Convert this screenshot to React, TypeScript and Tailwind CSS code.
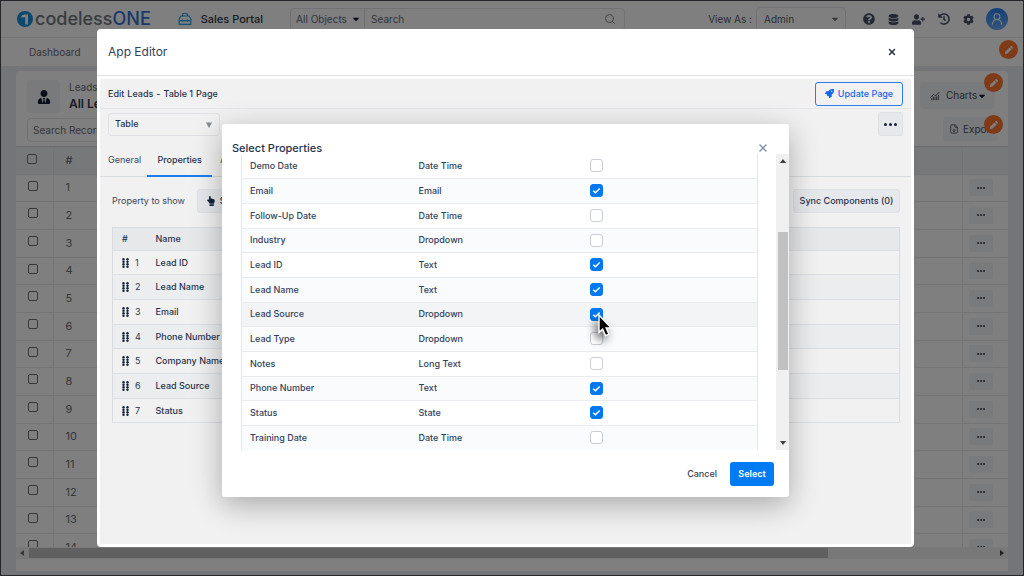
import { useState } from "react";
import {
  FaCaretDown,
  FaCog,
  FaDatabase,
  FaHandPointUp,
  FaHistory,
  FaPen,
  FaQuestionCircle,
  FaRocket,
  FaUserPlus,
  FaUserTie,
} from "react-icons/fa";
import { ChartNoAxesCombined, FileDown, Search, UserRound, X } from "lucide-react";

interface Property {
  name: string;
  type: string;
  checked: boolean;
}

const initialProperties: Property[] = [
  { name: "Demo Date", type: "Date Time", checked: false },
  { name: "Email", type: "Email", checked: true },
  { name: "Follow-Up Date", type: "Date Time", checked: false },
  { name: "Industry", type: "Dropdown", checked: false },
  { name: "Lead ID", type: "Text", checked: true },
  { name: "Lead Name", type: "Text", checked: true },
  { name: "Lead Source", type: "Dropdown", checked: true },
  { name: "Lead Type", type: "Dropdown", checked: false },
  { name: "Notes", type: "Long Text", checked: false },
  { name: "Phone Number", type: "Text", checked: true },
  { name: "Status", type: "State", checked: true },
  { name: "Training Date", type: "Date Time", checked: false },
];

const shownProperties = [
  "Lead ID",
  "Lead Name",
  "Email",
  "Phone Number",
  "Company Name",
  "Lead Source",
  "Status",
];

const leadRows = Array.from({ length: 14 }, (_, i) => i + 1);

function Logo() {
  return (
    <div className="flex items-center gap-0.5">
      <svg className="size-4" viewBox="0 0 16 16" aria-hidden="true">
        <circle cx="8" cy="8" r="8" fill="#1590dc" />
        <path d="M4 6.6 C4.2 4.4 5.6 3.4 7.6 3.4 H11 V13.6 H8.2 V6.2 H7.4 C6.8 6.2 6.6 6.3 6.5 6.6 Z" fill="#fff" />
      </svg>
      <span className="text-[18px] leading-5 font-medium text-[#72767d]">
        codeless<span className="text-[#3a72d4]">ONE</span>
      </span>
    </div>
  );
}

function ToolboxIcon() {
  return (
    <svg className="size-3.5" viewBox="0 0 14 14" fill="none" stroke="#2ba5e8" strokeWidth="1.2" aria-hidden="true">
      <path d="M4.6 4V2.2c0-.4.3-.7.7-.7h3.4c.4 0 .7.3.7.7V4" />
      <path d="M1.2 7l1.6-3h8.4l1.6 3v5.3H1.2z" />
      <path d="M1.2 8.6h11.6M4.6 7.4v2.4M9.4 7.4v2.4" />
    </svg>
  );
}

function EditBadge({ className }: { className: string }) {
  return (
    <button
      aria-label="Edit section"
      className={`absolute flex size-[19px] items-center justify-center rounded-full bg-[#ff7430] text-white ${className}`}
    >
      <FaPen className="size-2" />
    </button>
  );
}

function TopBar() {
  return (
    <header className="flex h-[37px] shrink-0 items-center border-b border-[#e4e6ea] bg-white pr-[15px] pl-4">
      <Logo />
      <div className="ml-[27px] flex items-center gap-[9px]">
        <ToolboxIcon />
        <span className="text-[11px] font-medium text-[#2d374c]">Sales Portal</span>
      </div>
      <div className="ml-[27px] flex h-[23px] w-[335px] items-center rounded-sm border border-[#e2e4e8] text-[10px] text-[#666c78]">
        <button className="flex h-full w-[74px] items-center gap-1 border-r border-[#e2e4e8] pl-[5px]">
          <span className="whitespace-nowrap">All Objects</span>
          <FaCaretDown className="size-2.5 shrink-0 text-[#101a35]" />
        </button>
        <input
          type="search"
          aria-label="Search"
          placeholder="Search"
          className="h-full min-w-0 flex-1 px-1.5 outline-none placeholder:text-[#666c78]"
        />
        <Search className="mr-2 size-3 text-[#83888f]" />
      </div>
      <div className="ml-auto flex items-center">
        <label htmlFor="view-as" className="text-[10px] text-[#565d6b]">
          View As :
        </label>
        <div className="relative ml-1">
          <select
            id="view-as"
            className="block h-6 w-[90px] appearance-none rounded-sm border border-[#e2e4e8] pl-[7px] text-[10px] text-[#565d6b]"
          >
            <option>Admin</option>
          </select>
          <FaCaretDown className="pointer-events-none absolute top-[7px] right-1.5 size-2.5 text-[#6b7078]" />
        </div>
        <div className="ml-[17px] flex items-center gap-[13px] text-[#46506a]">
          <FaQuestionCircle className="size-3" />
          <FaDatabase className="size-[11px]" />
          <FaUserPlus className="size-[13px]" />
          <FaHistory className="size-3" />
          <FaCog className="size-[11px]" />
        </div>
        <div className="ml-3 flex size-[22px] items-center justify-center rounded-full bg-linear-to-b from-[#2480ec] to-[#6aa8f5] text-white">
          <UserRound className="size-3.5" strokeWidth={1.8} />
        </div>
      </div>
    </header>
  );
}

function LeadsPage() {
  return (
    <main className="flex min-h-0 flex-1 flex-col bg-[#e7ebf0] pt-[5px] pr-[15px] pb-1 pl-[15px]">
      <section className="flex min-h-0 flex-1 flex-col rounded-t-sm bg-white">
        <div className="flex h-[75px] shrink-0 justify-between pt-[9px] pr-[11px] pl-[11px]">
          <div>
            <div className="flex gap-[9px]">
              <div className="flex size-[33px] items-center justify-center rounded bg-[#f3f5f7] text-[#101a35]">
                <FaUserTie className="size-3.5" />
              </div>
              <div className="whitespace-nowrap">
                <p className="flex items-center gap-1 text-[10px] leading-[14px] text-[#666c78]">
                  Leads <FaCaretDown className="size-2.5" />
                </p>
                <h1 className="text-[12px] leading-5 font-semibold text-[#2d374c]">All Leads</h1>
              </div>
            </div>
            <input
              type="search"
              aria-label="Search Records"
              placeholder="Search Records"
              className="mt-1 block h-6 w-[140px] rounded-sm border border-[#e2e4e8] px-[5px] text-[10px] placeholder:text-[#6b7078]"
            />
          </div>
          <div className="flex flex-col items-end gap-2 pt-[2px] text-[10px] text-[#4a5160]">
            <button className="mr-0.5 flex h-[27px] w-[75px] items-center gap-1.5 rounded-sm bg-[#f3f5f7] pl-2.5">
              <ChartNoAxesCombined className="size-2.5 text-[#2d374c]" />
              <span className="flex items-center">
                Charts <FaCaretDown className="size-2.5 text-[#101a35]" />
              </span>
            </button>
            <button className="flex h-6 w-[54px] items-center gap-1 rounded-sm bg-[#f3f5f7] pl-1.5">
              <FileDown className="size-2.5 shrink-0" />
              Export
            </button>
          </div>
        </div>
        <div className="min-h-0 flex-1 overflow-hidden border-t border-[#d5d9df]">
          <table className="w-full border-collapse text-[11px] text-[#6b7078]">
            <thead>
              <tr className="h-[27px] border-b border-[#e4e6ea] bg-[#eef1f5]">
                <th className="w-[37px] border-r border-[#e4e6ea] pb-0.5 pl-[11px] text-left">
                  <input
                    type="checkbox"
                    aria-label="Select all"
                    className="block size-2.5 appearance-none rounded-xs border border-[#6b7078]"
                  />
                </th>
                <th className="pl-3 text-left font-medium">#</th>
                <th className="w-[46px] border-l border-[#e4e6ea]" aria-label="Actions" />
              </tr>
            </thead>
            <tbody>
              {leadRows.map((n) => (
                <tr key={n} className="h-7 border-b border-[#e4e6ea] nth-[3n+1]:h-[27px]">
                  <td className="border-r border-[#e4e6ea] pb-1 pl-3">
                    <input
                      type="checkbox"
                      aria-label={`Select row ${n}`}
                      className="block size-2.5 appearance-none rounded-xs border border-[#6b7078]"
                    />
                  </td>
                  <td className="pl-3">{n}</td>
                  <td className="border-l border-[#e4e6ea] pl-1.5">
                    <button
                      aria-label={`Row ${n} actions`}
                      className="flex h-[17px] w-6 items-center justify-center gap-px rounded-xs bg-[#f3f5f7]"
                    >
                      <span className="size-0.5 rounded-full bg-[#2d374c]" />
                      <span className="size-0.5 rounded-full bg-[#2d374c]" />
                      <span className="size-0.5 rounded-full bg-[#2d374c]" />
                    </button>
                  </td>
                </tr>
              ))}
            </tbody>
          </table>
        </div>
        <div className="mb-3 flex h-3 shrink-0 items-center bg-[#f1f1f1] px-[3px]">
          <svg className="size-1.5" viewBox="0 0 6 6" aria-hidden="true">
            <path d="M5 0v6L1 3z" fill="#707070" />
          </svg>
          <div className="ml-1 h-2.5 w-[81%] bg-[#c1c1c1]" />
          <svg className="ml-auto size-1.5" viewBox="0 0 6 6" aria-hidden="true">
            <path d="M1 0v6l4-3z" fill="#404040" />
          </svg>
        </div>
      </section>
    </main>
  );
}

function DragHandle() {
  return (
    <svg className="h-2.5 w-[7px]" viewBox="0 0 7 10" fill="#14203c" aria-hidden="true">
      {[1.2, 3.7, 6.2, 8.7].map((y) => (
        <g key={y}>
          <circle cx="1.5" cy={y} r="1.2" />
          <circle cx="5.5" cy={y} r="1.2" />
        </g>
      ))}
    </svg>
  );
}

function AppEditor() {
  return (
    <div
      role="dialog"
      aria-label="App Editor"
      className="flex w-full flex-col rounded-sm bg-white p-[3px] pt-0 text-[9px] text-[#3a465c]"
    >
      <div className="-mx-[3px] mb-[3px] flex h-[47px] shrink-0 items-center justify-between border-b border-[#dfe1e5] pr-[17px] pl-[11px]">
        <h2 className="text-[12px] text-[#33415c]">App Editor</h2>
        <button aria-label="Close editor">
          <X className="size-2.5 text-[#26334d]" strokeWidth={3.5} />
        </button>
      </div>
      <div className="flex-1 bg-[#f1f1f1]">
        <div className="flex h-[30px] items-center justify-between border-b border-[#e4e6e9] pr-2 pl-2">
          <p className="flex gap-[3px] font-medium text-[#26334d]">
            <span>Edit</span>
            <span>Leads</span>
            <span>-</span>
            <span>Table 1</span>
            <span>Page</span>
          </p>
          <button className="flex h-6 w-[88px] items-center justify-center gap-1 rounded-[3px] border border-[#2c7df0] font-medium text-[#1267ee]">
            <FaRocket className="size-[9px]" />
            Update Page
          </button>
        </div>
        <div className="flex items-center justify-between pt-[3px] pr-2 pl-2">
          <div className="relative">
            <select
              aria-label="Component"
              className="block h-[23px] w-28 appearance-none rounded-[3px] border border-[#dfe1e5] pl-1.5 font-medium text-[#26334d]"
            >
              <option>Table</option>
            </select>
            <svg className="pointer-events-none absolute top-[9px] right-2 size-1.5" viewBox="0 0 6 6" aria-hidden="true">
              <path d="M0 .5h6L3 6z" fill="#83888f" />
            </svg>
          </div>
          <button
            aria-label="More"
            className="flex h-6 w-[25px] items-center justify-center gap-0.5 rounded-[3px] border border-[#dfe1e5] bg-[#e6e8eb]"
          >
            <span className="size-[3px] rounded-full bg-[#14203c]" />
            <span className="size-[3px] rounded-full bg-[#14203c]" />
            <span className="size-[3px] rounded-full bg-[#14203c]" />
          </button>
        </div>
        <div role="tablist" className="flex h-[41px] border-b border-[#d8dbe0]">
          <button role="tab" className="pt-2 pr-[6px] pl-2">
            General
          </button>
          <button role="tab" aria-selected="true" className="-mb-px w-[65px] border-b-2 border-[#1a7fe8] pt-2 font-medium text-[#26334d]">
            Properties
          </button>
          <button role="tab" className="pt-2 pl-2">
            Actions
          </button>
        </div>
        <div className="flex flex-col gap-[14px] pt-3 pr-[11px] pl-3">
          <div className="flex h-6 items-center">
            <span>Property to show</span>
            <button className="ml-3 flex h-full items-center gap-1 rounded-[3px] border border-[#dfe1e5] bg-[#e6e8eb] px-2 font-medium text-[#26334d]">
              <FaHandPointUp className="size-2.5 text-[#14203c]" />
              Select Properties
            </button>
            <button className="ml-auto h-full w-[107px] rounded-[3px] border border-[#dfe1e5] bg-[#e6e8eb] font-medium text-[#26334d]">
              Sync Components (0)
            </button>
          </div>
          <table className="w-full table-fixed border-collapse border border-[#d8dbe0] text-left text-[#26334d]">
            <thead>
              <tr className="h-[23px] border-b border-[#dcdfe4] bg-[#e6e8ea]">
                <th className="w-[43px] pl-[9px] font-medium">#</th>
                <th className="font-medium">Name</th>
              </tr>
            </thead>
            <tbody>
              {shownProperties.map((name, i) => (
                <tr
                  key={name}
                  className="h-[25px] border-b border-[#dcdfe4] even:bg-[#ebedef] nth-[3n+1]:h-6"
                >
                  <td className="pl-[9px]">
                    <div className="flex items-center gap-1.5">
                      <DragHandle />
                      {i + 1}
                    </div>
                  </td>
                  <td className="font-medium">{name}</td>
                </tr>
              ))}
            </tbody>
          </table>
        </div>
      </div>
    </div>
  );
}

function SelectPropertiesDialog() {
  const [properties, setProperties] = useState(initialProperties);

  const toggle = (name: string) => {
    setProperties((prev) =>
      prev.map((p) => (p.name === name ? { ...p, checked: !p.checked } : p))
    );
  };

  return (
    <div
      role="dialog"
      aria-label="Select Properties"
      className="w-[567px] rounded-[3px] bg-white text-[9px] text-[#33415c] shadow-[0_8px_30px_rgba(0,0,0,0.3)]"
    >
      <div className="flex h-[30px] items-start justify-between pt-[18px] pr-5 pl-2.5">
        <h3 className="text-[11px] leading-3 font-medium text-[#26334d]">Select Properties</h3>
        <button aria-label="Close">
          <X className="size-3 text-[#8591a5]" strokeWidth={3} />
        </button>
      </div>
      <div className="flex">
        <div className="flex-1 pr-[18px] pl-[19px]">
          <table className="w-full table-fixed border-collapse border-x border-[#e4e7eb] text-left">
            <tbody>
              {properties.map((p) => (
                <tr
                  key={p.name}
                  className={`h-[25px] border-b border-[#e9ebee] last:border-b-0 nth-[3n+1]:h-6 ${
                    p.name === "Lead Source" ? "bg-[#f3f4f6]" : "even:bg-[#fafbfd]"
                  }`}
                >
                  <td className="w-[169px] pl-2 font-medium">{p.name}</td>
                  <td className="w-[171px] pl-2 font-medium">{p.type}</td>
                  <td className="pl-2">
                    <div className="grid size-[13px]">
                      <input
                        type="checkbox"
                        aria-label={p.name}
                        checked={p.checked}
                        onChange={() => toggle(p.name)}
                        className="col-start-1 row-start-1 size-[13px] appearance-none rounded-[3px] border border-[#c9cdd6] bg-white checked:border-[#0078f0] checked:bg-[#0078f0]"
                      />
                      {p.checked && (
                        <svg
                          className="pointer-events-none col-start-1 row-start-1 size-[13px]"
                          viewBox="0 0 13 13"
                          fill="none"
                          stroke="#fff"
                          strokeWidth="1.5"
                          aria-hidden="true"
                        >
                          <path d="M3.2 6.7l2.2 2.1 4.3-4.4" />
                        </svg>
                      )}
                    </div>
                  </td>
                </tr>
              ))}
            </tbody>
          </table>
        </div>
        {/* Scroll track */}
        <div className="flex w-[13px] flex-col items-center bg-[#f0f0f0] py-1">
          <svg className="size-1.5" viewBox="0 0 6 6" aria-hidden="true">
            <path d="M0 5h6L3 1z" fill="#404040" />
          </svg>
          <div className="mt-[68px] h-[138px] w-2.5 bg-[#c1c1c1]" />
          <svg className="mt-auto size-1.5" viewBox="0 0 6 6" aria-hidden="true">
            <path d="M0 1h6L3 5z" fill="#404040" />
          </svg>
        </div>
      </div>
      <div className="flex items-center justify-end gap-[13px] pt-3 pr-[15px] pb-[11px]">
        <button className="font-medium text-[#3c414b]">Cancel</button>
        <button className="h-6 w-11 rounded-[3px] bg-[#007bf2] font-semibold text-white">Select</button>
      </div>
    </div>
  );
}

function Cursor() {
  return (
    <svg
      className="pointer-events-none absolute top-[312px] left-[596px] h-[26px] w-4 drop-shadow-[-3px_5px_4px_rgba(0,0,0,0.6)]"
      viewBox="0 0 16 26"
      aria-hidden="true"
    >
      <path
        d="M2 2v17.4l3.7-3.2 2.8 6.4 3.4-1.4-2.8-6.3h5z"
        fill="#000"
        stroke="#fff"
        strokeWidth="1.4"
      />
    </svg>
  );
}

export default function App() {
  return (
    <div className="relative flex h-screen flex-col overflow-hidden border border-[#26262a] font-['Inter',sans-serif]">
      <TopBar />
      <nav className="flex h-7 shrink-0 items-center bg-white pl-7 text-[10px]">
        <a href="#dashboard" className="text-[#6b7078]">
          Dashboard
        </a>
      </nav>
      <LeadsPage />
      <EditBadge className="top-[39px] right-[5px]" />
      <EditBadge className="top-[72px] right-5" />
      <EditBadge className="top-[114px] right-5" />

      {/* Page editor on top of the dimmed page */}
      <div className="absolute inset-0 flex bg-black/50 pt-7 pr-[109px] pb-7 pl-24">
        <AppEditor />
      </div>
      <div className="absolute inset-0 flex items-start justify-center pt-[123px] pr-[109px] pl-24">
        <SelectPropertiesDialog />
      </div>
      <Cursor />
    </div>
  );
}
